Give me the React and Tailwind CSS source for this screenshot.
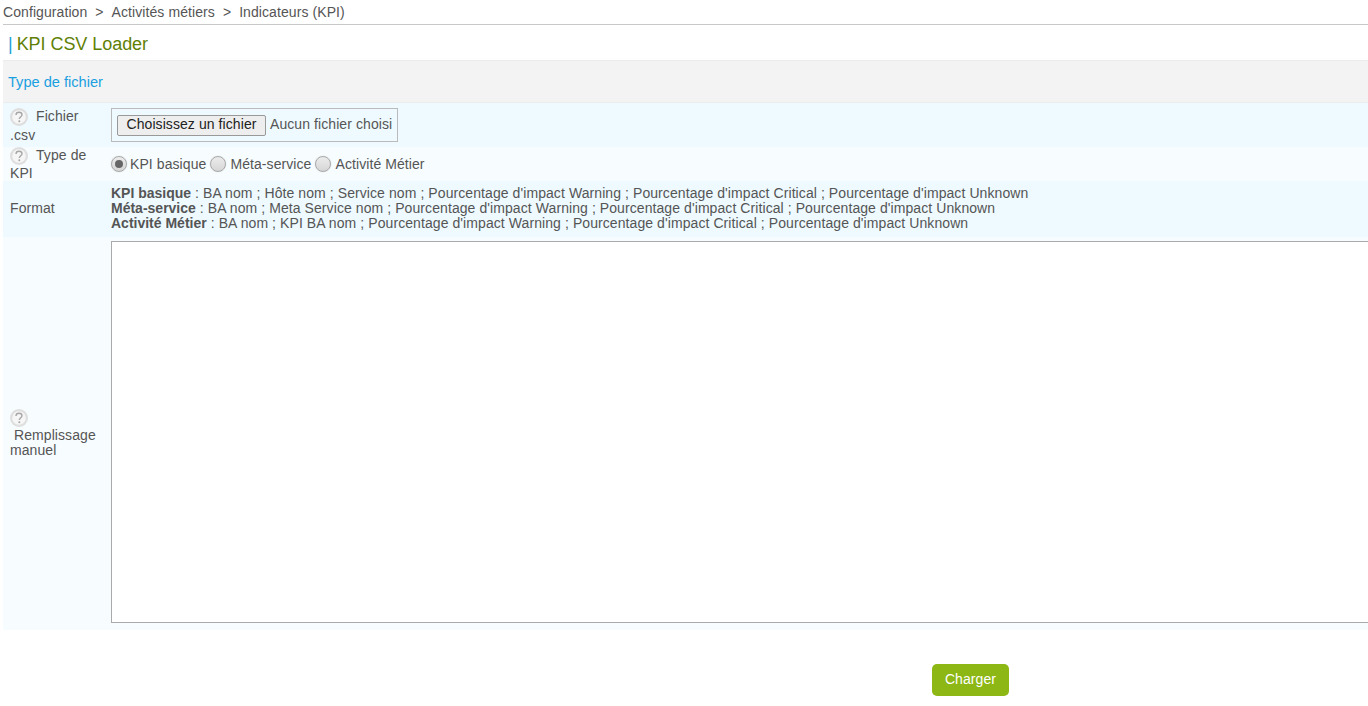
const Help = () => (
  <svg width="18" height="18" viewBox="0 0 18 18" className="inline-block align-middle">
    <circle cx="9" cy="9" r="9" fill="#dedede" />
    <circle cx="9" cy="9" r="6.8" fill="#f6f6f6" />
    <path d="M6 6.9 C6 5.1 7.4 4.2 9 4.2 C10.7 4.2 12 5.2 12 6.7 C12 8.6 9.3 8.8 9.3 11" fill="none" stroke="#a6a6a6" strokeWidth="1.4" />
    <circle cx="9.3" cy="13.3" r="1" fill="#a6a6a6" />
  </svg>
);

const Radio = ({ checked }) => (
  <span className="flex h-[16px] w-[16px] shrink-0 items-center justify-center rounded-full border border-[#a9a9a9] bg-gradient-to-b from-[#ececec] to-[#d6d6d6] shadow-[0_0_1px_#bbb]">
    {checked && <span className="h-[8px] w-[8px] rounded-full bg-[#666]" />}
  </span>
);

const fields = [
  ["BA nom", "Hôte nom", "Service nom"],
  ["BA nom", "Meta Service nom"],
  ["BA nom", "KPI BA nom"],
];
const tail = "Pourcentage d'impact Warning ; Pourcentage d'impact Critical ; Pourcentage d'impact Unknown";

export default function App() {
  return (
    <div className="h-[706px] w-[1368px] overflow-hidden bg-white font-['Liberation_Sans',Arial,sans-serif] text-[14px] tracking-[0.08px] text-[#555]">
      <div className="ml-[3px] flex h-[25px] items-center gap-[8px] border-b border-[#c8c8c8] text-[14px] text-[#555]">
        <span>Configuration</span>
        <span>&gt;</span>
        <span>Activités métiers</span>
        <span>&gt;</span>
        <span>Indicateurs (KPI)</span>
      </div>
      <h1 className="ml-[8px] flex h-[35px] items-center pt-[3px] text-[18px] font-normal tracking-[-0.05px] text-[#5f7f06]">
        <span className="mr-[4px] text-[#1ea0dc]">|</span>KPI CSV Loader
      </h1>
      <div className="ml-[3px]">
        <div className="flex h-[43px] items-center border-b border-t border-[#ececec] bg-[#f3f3f3] pl-[5px] pt-[2px] text-[14.6px] tracking-normal text-[#1a9fe0]">
          Type de fichier
        </div>
        <div className="flex h-[44px] bg-[#eefaff]">
          <div className="w-[108px] shrink-0 pl-[7px] pt-[4px] leading-[18px]">
            <Help />
            <span className="ml-[8px]">Fichier</span>
            <br />
            .csv
          </div>
          <div className="pt-[5px]">
            <div className="flex h-[34px] w-[287px] items-center border border-[#bbb] pl-[5px] text-[14px]">
              <span className="flex h-[21px] w-[149px] items-center justify-center rounded-[2px] border border-[#999] bg-[#eee] pb-[1px] text-[14px] text-[#222]">
                Choisissez un fichier
              </span>
              <span className="ml-[4px] pb-[1px]">Aucun fichier choisi</span>
            </div>
          </div>
        </div>
        <div className="flex h-[34px] bg-[#f7fcff]">
          <div className="w-[108px] shrink-0 pl-[7px] leading-[17px]">
            <Help />
            <span className="ml-[8px]">Type de</span>
            <br />
            KPI
          </div>
          <div className="flex items-center">
            <Radio checked />
            <span className="ml-[3px]">KPI basique</span>
            <span className="ml-[4px]"><Radio /></span>
            <span className="ml-[4px]">Méta-service</span>
            <span className="ml-[4px]"><Radio /></span>
            <span className="ml-[4px]">Activité Métier</span>
          </div>
        </div>
        <div className="flex h-[56px] bg-[#eefaff]">
          <div className="flex w-[108px] shrink-0 items-center pb-[2px] pl-[7px]">Format</div>
          <div className="pt-[5px] leading-[15px]">
            {["KPI basique", "Méta-service", "Activité Métier"].map((name, i) => (
              <div key={name} className="whitespace-nowrap">
                <b className="tracking-normal">{name}</b> : {fields[i].join(" ; ")} ; {tail}
              </div>
            ))}
          </div>
        </div>
        <div className="flex h-[393px] bg-[#f7fcff]">
          <div className="flex w-[108px] shrink-0 flex-col justify-center pb-[4px] pl-[7px] leading-[15px]">
            <span className="mb-[1px] block h-[18px] pt-[4px]"><Help /></span>
            <span className="mt-[4px]">&nbsp;Remplissage</span>
            <span>manuel</span>
          </div>
          <div className="pt-[4px]">
            <textarea className="block h-[382px] w-[1400px] resize-none border border-[#aaa] bg-white outline-none" />
          </div>
        </div>
      </div>
      <div className="ml-[932px] mt-[34px]">
        <button className="h-[32px] w-[77px] rounded-[5px] bg-[#8cb714] pb-[2px] text-[14px] font-normal text-white">Charger</button>
      </div>
    </div>
  );
}
